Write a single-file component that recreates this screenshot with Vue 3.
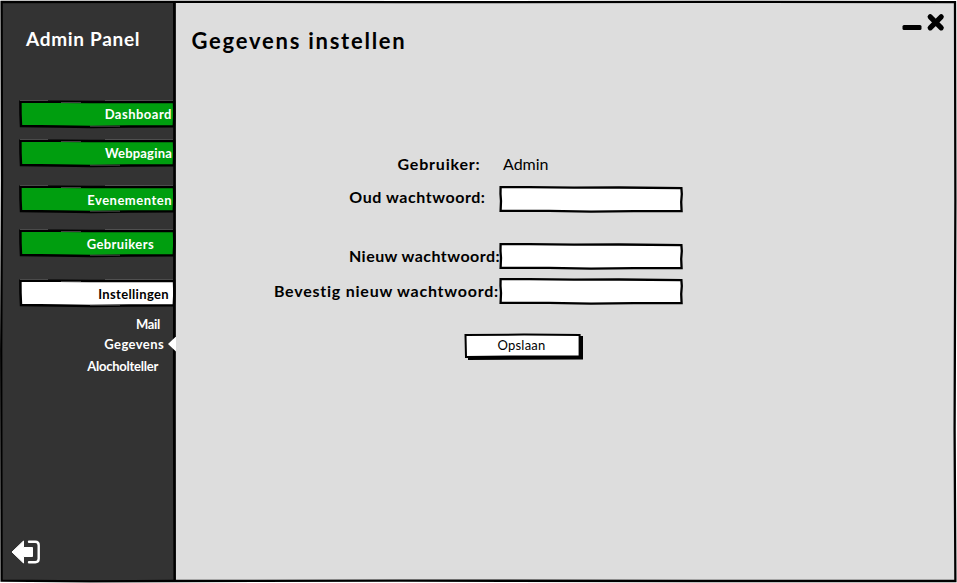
<script setup>
const items = [
  { label: 'Dashboard', cls: 'dashboard' },
  { label: 'Webpagina', cls: 'webpagina' },
  { label: 'Evenementen', cls: 'evenementen' },
  { label: 'Gebruikers', cls: 'gebruikers' },
  { label: 'Instellingen', cls: 'instellingen' },
]
const subItems = [
  { label: 'Mail', cls: 'mail' },
  { label: 'Gegevens', cls: 'gegevens', active: true },
  { label: 'Alocholteller', cls: 'teller' },
]
const fields = [
  { label: 'Oud wachtwoord:', cls: 'old' },
  { label: 'Nieuw wachtwoord:', cls: 'new' },
  { label: 'Bevestig nieuw wachtwoord:', cls: 'confirm' },
]
</script>

<template>
  <div class="window">
    <aside class="sidebar">
      <h1 class="brand"><span>Admin Panel</span></h1>
      <nav class="menu">
        <a v-for="item in items" :key="item.label" class="item" :class="item.cls">
          <svg class="sketch" viewBox="0 0 157 29">
            <path class="fill" d="M2 3H155V26H2Z" />
            <path class="ink" d="M1.4 1.7L40 1.8L72 2.1L110 2L155 1.8L155.4 14L154.8 26.2L110 26.4L72 26.9L40 26.6L2 26L1.5 14Z" />
            <path class="trace" d="M1 .4H29M86 .4H154M42 2.6H62M71 26.2H101" />
          </svg>
          <span>{{ item.label }}</span>
        </a>
      </nav>
      <ul class="submenu">
        <li v-for="sub in subItems" :key="sub.label" :class="sub.cls">
          <span>{{ sub.label }}</span>
          <i v-if="sub.active" class="pointer"></i>
        </li>
      </ul>
      <svg class="logout" viewBox="0 0 30 26">
        <path d="M1 13L12.5 2V8.5H21.5V17.5H12.5V24Z" fill="#fff" stroke="#fff" stroke-width="1" stroke-linejoin="round" />
        <path d="M18 2.8H24.3Q27.7 2.8 27.7 6.2V19.8Q27.7 23.2 24.3 23.2H18" fill="none" stroke="#fff" stroke-width="2.4" stroke-linecap="round" />
      </svg>
    </aside>

    <main class="content">
      <header class="topbar">
        <h2 class="title">Gegevens instellen</h2>
        <div class="controls">
          <svg viewBox="0 0 44 20">
            <rect x="1.5" y="12" width="19" height="5" rx="1.5" />
            <path d="M29.2 3.8L40.2 14.8M40.2 3.8L29.2 14.8" stroke="#000" stroke-width="5.2" stroke-linecap="round" />
          </svg>
        </div>
      </header>

      <form class="form" @submit.prevent>
        <div class="row user">
          <label>Gebruiker:</label>
          <span class="value">Admin</span>
        </div>
        <div v-for="field in fields" :key="field.label" class="row" :class="field.cls">
          <label>{{ field.label }}</label>
          <div class="field">
            <svg class="sketch" viewBox="0 0 185 28">
              <path class="fill" d="M2 2H183V26H2Z" />
              <path class="ink input-ink" d="M1.6 2.2L30 2.1L75 2.6L120 2.5L182.4 3.1L182.8 9L182.2 17L182.6 26.1L135 26.1L92 26.6L50 25.9L1.6 25.8L2 16L1.5 9Z" />
            </svg>
          </div>
        </div>
        <button class="save" type="submit">
          <svg class="sketch" viewBox="0 0 120 28">
            <path d="M4 4L119 3V26.5L4 27Z" />
            <path class="fill" d="M1.5 2L60 1.6L115.6 2V23.6L60 23.4L2 24Z" />
            <path class="ink-thin" d="M1.5 2L60 1.6L115.6 2V23.6L60 23.4L2 24Z" />
          </svg>
          <span>Opslaan</span>
        </button>
      </form>
    </main>

    <svg class="frame" viewBox="0 0 957 583">
      <path d="M1.6 2L170 1.8L400 2.2L700 1.8L955 2.2L955.4 200L954.6 430L955.4 581L700 581L400 580.6L174 581L90 581.4L1.6 580.6L1.2 350L2 180Z" />
      <path d="M174.2 2L174.4 200L174 400L174.6 581" />
    </svg>
  </div>
</template>

<style>
body {
  margin: 0;
  background: #fff;
}
</style>

<style scoped>
.window {
  position: relative;
  display: flex;
  width: 957px;
  height: 583px;
  overflow: hidden;
  font-family: Lato, "Liberation Sans", sans-serif;
  color: #000;
}
.frame {
  position: absolute;
  inset: 0;
  width: 957px;
  height: 583px;
  fill: none;
  stroke: #000;
  stroke-width: 2.3;
  pointer-events: none;
}
.sidebar {
  box-sizing: border-box;
  width: 175px;
  margin: 1px 0 2px 1px;
  background: #333;
  color: #fff;
  display: flex;
  flex-direction: column;
}
.brand {
  margin: 25px 0 0 25px;
  font-size: 19px;
  line-height: 26px;
  font-weight: 700;
  letter-spacing: 0.7px;
  white-space: nowrap;
}
.menu {
  display: flex;
  flex-direction: column;
  margin: 48px 0 0 18px;
}
.item {
  position: relative;
  box-sizing: border-box;
  width: 157px;
  height: 29px;
  padding-right: 4px;
  display: flex;
  justify-content: flex-end;
  font-size: 13px;
  line-height: 29px;
  font-weight: 700;
}
.item span {
  position: relative;
}
.dashboard { letter-spacing: 0.5px; }
.webpagina { margin-top: 10px; letter-spacing: 0.2px; }
.evenementen { margin-top: 17px; line-height: 31px; letter-spacing: 0.5px; }
.gebruikers { margin-top: 15px; padding-right: 22px; line-height: 31px; letter-spacing: 0.4px; }
.instellingen { margin-top: 21px; padding-right: 7px; line-height: 31px; letter-spacing: 0.35px; color: #000; }
.sketch {
  position: absolute;
  left: 0;
  top: 0;
  width: 100%;
  height: 100%;
}
.fill { fill: #fff; }
.item .fill { fill: #009e0f; }
.instellingen .fill { fill: #fff; }
.ink { fill: none; stroke: #000; stroke-width: 2.5; }
.input-ink { stroke-width: 2.3; }
.ink-thin { fill: none; stroke: #000; stroke-width: 2; }
.trace { fill: none; stroke: #777; stroke-width: 0.6; }
.submenu {
  list-style: none;
  margin: 6px 0 0;
  padding: 0;
  font-size: 13px;
  line-height: 20px;
  font-weight: 700;
}
.submenu li {
  display: flex;
  justify-content: flex-end;
  align-items: center;
  height: 20px;
}
.submenu .mail { padding-right: 16px; letter-spacing: -0.3px; }
.submenu .gegevens { gap: 4px; letter-spacing: 0.4px; }
.submenu .teller { padding-right: 18px; margin-top: 2px; letter-spacing: -0.25px; }
.pointer {
  position: relative;
  z-index: 1;
  width: 8px;
  height: 15px;
  background: #fff;
  clip-path: polygon(100% 0, 0 50%, 100% 100%);
}
.logout {
  width: 30px;
  height: 26px;
  margin: auto 0 16px 10px;
}
.content {
  flex: 1;
  margin: 1px 1px 2px 0;
  background: #ddd;
}
.topbar {
  display: flex;
  justify-content: space-between;
  height: 60px;
}
.title {
  margin: 24px 0 0 15.5px;
  font-size: 22px;
  line-height: 32px;
  font-weight: 700;
  letter-spacing: 1.75px;
}
.controls {
  margin: 12px 11px 0 0;
}
.controls svg {
  display: block;
  width: 44px;
  height: 20px;
}
.form {
  display: flex;
  flex-direction: column;
  padding-top: 89px;
}
.row {
  display: grid;
  grid-template-columns: 323px 185px;
  height: 28px;
  line-height: 28px;
  font-size: 16px;
}
.row label {
  justify-self: end;
  font-weight: 700;
  white-space: nowrap;
  letter-spacing: 0.8px;
}
.user label { padding-right: 18.5px; }
.value { padding-left: 4px; }
.old { margin-top: 7px; }
.old label { padding-right: 13.5px; margin-top: -2px; letter-spacing: 0.55px; }
.new { margin-top: 29px; }
.new label { letter-spacing: 0.45px; margin-right: -1px; }
.confirm { margin-top: 7px; }
.confirm label { letter-spacing: 0.77px; }
.field { position: relative; }
.save {
  position: relative;
  width: 120px;
  height: 28px;
  margin: 28px 0 0 287.5px;
  padding: 0 4px 4px 0;
  border: 0;
  background: none;
  font: 13px/22px Lato, "Liberation Sans", sans-serif;
  letter-spacing: 0.2px;
  color: #000;
}
.save span { position: relative; }
</style>
